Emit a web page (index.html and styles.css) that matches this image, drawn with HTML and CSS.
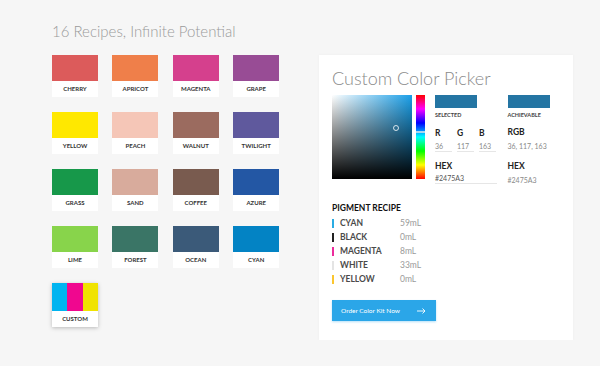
FILE: index.html
```html
<!DOCTYPE html>
<html>
<head>
  <title>Color Recipes</title>
  <link rel="stylesheet" href="styles.css">
</head>
<body>
  <div class="page">
    <h1 class="page-title">16 Recipes, Infinite Potential</h1>
    <div class="content">
      <div class="recipes">
        <div class="recipe"><div class="chip" style="background:#dc5b5b"></div><div class="recipe-name">Cherry</div></div>
        <div class="recipe"><div class="chip" style="background:#ef7f4a"></div><div class="recipe-name">Apricot</div></div>
        <div class="recipe"><div class="chip" style="background:#d5408d"></div><div class="recipe-name">Magenta</div></div>
        <div class="recipe"><div class="chip" style="background:#984c95"></div><div class="recipe-name">Grape</div></div>

        <div class="recipe"><div class="chip" style="background:#ffe800"></div><div class="recipe-name">Yellow</div></div>
        <div class="recipe"><div class="chip" style="background:#f5c6b7"></div><div class="recipe-name">Peach</div></div>
        <div class="recipe"><div class="chip" style="background:#9b6b5f"></div><div class="recipe-name">Walnut</div></div>
        <div class="recipe"><div class="chip" style="background:#5f599d"></div><div class="recipe-name">Twilight</div></div>

        <div class="recipe"><div class="chip" style="background:#17984a"></div><div class="recipe-name">Grass</div></div>
        <div class="recipe"><div class="chip" style="background:#d8ab9c"></div><div class="recipe-name">Sand</div></div>
        <div class="recipe"><div class="chip" style="background:#795b4f"></div><div class="recipe-name">Coffee</div></div>
        <div class="recipe"><div class="chip" style="background:#2357a4"></div><div class="recipe-name">Azure</div></div>

        <div class="recipe"><div class="chip" style="background:#88d44b"></div><div class="recipe-name">Lime</div></div>
        <div class="recipe"><div class="chip" style="background:#3a7566"></div><div class="recipe-name">Forest</div></div>
        <div class="recipe"><div class="chip" style="background:#3b5a79"></div><div class="recipe-name">Ocean</div></div>
        <div class="recipe"><div class="chip" style="background:#0383c4"></div><div class="recipe-name">Cyan</div></div>

        <div class="recipe custom">
          <div class="chip cmy"><span class="c"></span><span class="m"></span><span class="y"></span></div>
          <div class="recipe-name">Custom</div>
        </div>
      </div>

      <div class="picker-card">
        <h2 class="picker-title">Custom Color Picker</h2>
        <div class="picker-top">
          <div class="sv-box"><span class="sv-cursor"></span></div>
          <div class="hue-bar"><span class="hue-marker"></span></div>

          <div class="color-col selected-col">
            <div class="sample"></div>
            <div class="sample-label">Selected</div>
            <div class="rgb-inputs">
              <div class="field"><div class="field-label">R</div><div class="field-value">36</div></div>
              <div class="field"><div class="field-label">G</div><div class="field-value">117</div></div>
              <div class="field"><div class="field-label">B</div><div class="field-value">163</div></div>
            </div>
            <div class="field hex-field"><div class="field-label">HEX</div><div class="field-value">#2475A3</div></div>
          </div>

          <div class="color-col">
            <div class="sample"></div>
            <div class="sample-label">Achievable</div>
            <div class="info-label">RGB</div>
            <div class="info-value">36, 117, 163</div>
            <div class="info-label hex-label">HEX</div>
            <div class="info-value">#2475A3</div>
          </div>
        </div>

        <div class="recipe-list">
          <div class="recipe-heading">Pigment Recipe</div>
          <div class="pigment"><span class="bar" style="background:#2aace3"></span><span class="pigment-name">Cyan</span><span class="pigment-amount">59mL</span></div>
          <div class="pigment"><span class="bar" style="background:#222"></span><span class="pigment-name">Black</span><span class="pigment-amount">0mL</span></div>
          <div class="pigment"><span class="bar" style="background:#ec2c9c"></span><span class="pigment-name">Magenta</span><span class="pigment-amount">8mL</span></div>
          <div class="pigment"><span class="bar" style="background:#e4e4e4"></span><span class="pigment-name">White</span><span class="pigment-amount">33mL</span></div>
          <div class="pigment"><span class="bar" style="background:#fbc62f"></span><span class="pigment-name">Yellow</span><span class="pigment-amount">0mL</span></div>
        </div>

        <button class="order-btn">Order Color Kit Now
          <svg width="9" height="6" viewBox="0 0 9 6"><path d="M0 3h8M5.5 0.5L8 3L5.5 5.5" fill="none" stroke="#fff" stroke-width="0.9"/></svg>
        </button>
      </div>
    </div>
  </div>
</body>
</html>
```

FILE: styles.css
```css
body {
  margin: 0;
  background-color: #f6f6f6;
  font-family: Lato, "Open Sans", sans-serif;
  color: #333;
}

.page {
  padding: 21px 0 0 52px;
}

.page-title {
  margin: 0;
  font-size: 15px;
  font-weight: 300;
  color: #9a9a9a;
  line-height: 20px;
  height: 34px;
}

.content {
  display: flex;
  gap: 40px;
  align-items: flex-start;
}

.recipes {
  display: grid;
  grid-template-columns: repeat(4, 46px);
  column-gap: 14.4px;
  row-gap: 15px;
  width: 227px;
  flex-shrink: 0;
}

.recipe {
  background-color: #fff;
}

.chip {
  height: 26px;
}

.recipe-name {
  height: 16px;
  line-height: 16px;
  text-align: center;
  font-size: 6px;
  font-weight: 700;
  text-transform: uppercase;
  color: #333;
}

.custom {
  box-shadow: 0 1px 4px rgba(0,0,0,0.25);
}

.cmy {
  display: flex;
  height: 28px;
}

.cmy span { flex: 1; }
.cmy .c { background-color: #00b4f0; }
.cmy .m { background-color: #f0078f; }
.cmy .y { background-color: #f0e300; }

.picker-card {
  flex-shrink: 0;
  width: 241px;
  height: 270px;
  padding: 13px 0 2px 13px;
  background-color: #fff;
  box-shadow: 0 0 3px rgba(0,0,0,0.04);
}

.picker-title {
  margin: 0;
  font-size: 18px;
  font-weight: 300;
  line-height: 20px;
  color: #8a8a8a;
}

.picker-top {
  display: flex;
  margin-top: 7px;
}

.sv-box {
  position: relative;
  width: 80px;
  height: 84px;
  background: linear-gradient(to top, #000, rgba(0,0,0,0)),
              linear-gradient(to right, #fff, #1a9fe8);
}

.sv-cursor {
  position: absolute;
  left: 61px;
  top: 29.5px;
  width: 4px;
  height: 4px;
  border: 1px solid rgba(255,255,255,0.8);
  border-radius: 50%;
}

.hue-bar {
  position: relative;
  width: 9px;
  height: 84px;
  margin-left: 3.5px;
  background: linear-gradient(to bottom, #f00, #f0f, #00f, #0ff, #0f0, #ff0, #f00);
}

.hue-marker {
  position: absolute;
  left: 0;
  right: 0;
  top: 36px;
  height: 2px;
  background-color: #a9d6ee;
}

.color-col {
  display: flex;
  flex-direction: column;
  margin-left: 10.5px;
}

.selected-col {
  width: 62px;
}

.sample {
  width: 42px;
  height: 13px;
  background-color: #2475a3;
}

.sample-label {
  margin-top: 4px;
  font-size: 5.5px;
  font-weight: 700;
  text-transform: uppercase;
  color: #444;
  line-height: 7px;
}

.rgb-inputs {
  display: flex;
  gap: 5px;
  margin-top: 9px;
}

.rgb-inputs .field {
  width: 17px;
}

.field {
  border-bottom: 1px solid #e6e6e6;
}

.field-label {
  font-size: 8.5px;
  font-weight: 700;
  color: #222;
  line-height: 11px;
}

.field-value {
  margin-top: 2px;
  font-size: 7px;
  color: #8a8a8a;
  line-height: 10px;
}

.hex-field {
  margin-top: 9px;
  width: 62px;
}

.hex-field .field-value {
  color: #555;
  margin-top: 1px;
}

.info-label {
  margin-top: 8px;
  font-size: 8.5px;
  font-weight: 700;
  color: #222;
  line-height: 11px;
}

.hex-label {
  margin-top: 10px;
}

.info-value {
  margin-top: 3px;
  font-size: 7px;
  color: #8a8a8a;
  line-height: 10px;
}

.recipe-list {
  margin-top: 17px;
}

.recipe-heading {
  font-size: 8.5px;
  font-weight: 700;
  text-transform: uppercase;
  color: #111;
  line-height: 12px;
  margin-bottom: 2px;
}

.pigment {
  display: flex;
  align-items: center;
  height: 14px;
  font-size: 8.5px;
  text-transform: uppercase;
}

.bar {
  width: 2px;
  height: 9px;
  margin-right: 6px;
}

.pigment-name {
  width: 60px;
  font-weight: 700;
  color: #4a4a4a;
}

.pigment-amount {
  text-transform: none;
  color: #9a9a9a;
}

.order-btn {
  display: flex;
  align-items: center;
  justify-content: space-between;
  width: 104px;
  height: 21px;
  margin-top: 14px;
  padding: 0 10px 0 9px;
  border: none;
  background-color: #2ba6e8;
  color: #fff;
  font-family: Lato, sans-serif;
  font-size: 6.5px;
  box-shadow: 0 1px 2px rgba(43,166,232,0.35);
}
```
